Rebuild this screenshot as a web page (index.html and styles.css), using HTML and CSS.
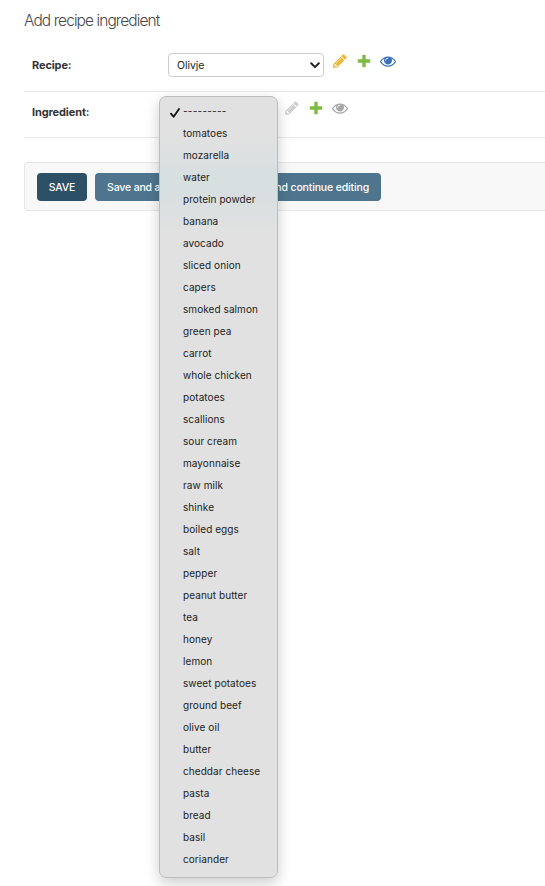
FILE: index.html
```html
<!DOCTYPE html>
<html lang="en">
<head>
<meta charset="utf-8">
<title>Add recipe ingredient</title>
<link rel="stylesheet" href="styles.css">
</head>
<body>
<svg class="defs" aria-hidden="true">
  <symbol id="pencil" viewBox="0 0 1792 1792"><path d="M491 1536l91-91-235-235-91 91v107h128v128h107zm523-928q0-22-22-22-10 0-17 7l-542 542q-7 7-7 17 0 22 22 22 10 0 17-7l542-542q7-7 7-17zm-54-192l416 416-832 832h-416v-416zm683 96q0 53-37 90l-166 166-416-416 166-165q36-38 90-38 53 0 91 38l235 234q37 39 37 91z"/></symbol>
  <symbol id="plus" viewBox="0 0 1792 1792"><path d="M1600 796v192q0 40-28 68t-68 28h-416v416q0 40-28 68t-68 28h-192q-40 0-68-28t-28-68v-416h-416q-40 0-68-28t-28-68v-192q0-40 28-68t68-28h416v-416q0-40 28-68t68-28h192q40 0 68 28t28 68v416h416q40 0 68 28t28 68z"/></symbol>
  <symbol id="eye" viewBox="0 0 1792 1792"><path d="M1664 960q-152-236-381-353 61 104 61 225 0 185-131.5 316.5t-316.5 131.5-316.5-131.5-131.5-316.5q0-121 61-225-229 117-381 353 133 205 333.5 326.5t434.5 121.5 434.5-121.5 333.5-326.5zm-720-384q0-20-14-34t-34-14q-125 0-214.5 89.5t-89.5 214.5q0 20 14 34t34 14 34-14 14-34q0-86 61-147t147-61q20 0 34-14t14-34zm848 384q0 34-20 69-140 230-376.5 368.5t-499.5 138.5-499.5-139-376.5-368q-20-35-20-69t20-69q140-229 376.5-368t499.5-139 499.5 139 376.5 368q20 35 20 69z"/></symbol>
</svg>
<main class="content">
  <h1 class="title">Add recipe ingredient</h1>
  <div class="row row-recipe">
    <span class="label">Recipe:</span>
    <div class="select">Olivje
      <svg class="chevron" viewBox="0 0 10 7"><path d="M1.2 1.3 5 5.1 8.8 1.3"/></svg>
    </div>
    <div class="links">
      <svg class="icon change"><use href="#pencil"/></svg>
      <svg class="icon add"><use href="#plus"/></svg>
      <svg class="icon view"><use href="#eye"/></svg>
    </div>
  </div>
  <div class="row row-ingredient">
    <span class="label">Ingredient:</span>
    <div class="closed-select">
      <ul class="menu">
        <li class="selected"><svg class="check" viewBox="0 0 10 10"><path d="M1 5.6 3.6 8.8 9 1"/></svg>---------</li>
        <li>tomatoes</li><li>mozarella</li><li>water</li><li>protein powder</li><li>banana</li><li>avocado</li>
        <li>sliced onion</li><li>capers</li><li>smoked salmon</li><li>green pea</li><li>carrot</li><li>whole chicken</li>
        <li>potatoes</li><li>scallions</li><li>sour cream</li><li>mayonnaise</li><li>raw milk</li><li>shinke</li>
        <li>boiled eggs</li><li>salt</li><li>pepper</li><li>peanut butter</li><li>tea</li><li>honey</li><li>lemon</li>
        <li>sweet potatoes</li><li>ground beef</li><li>olive oil</li><li>butter</li><li>cheddar cheese</li><li>pasta</li>
        <li>bread</li><li>basil</li><li>coriander</li>
      </ul>
    </div>
    <div class="links">
      <svg class="icon change disabled"><use href="#pencil"/></svg>
      <svg class="icon add"><use href="#plus"/></svg>
      <svg class="icon view-disabled"><use href="#eye"/></svg>
    </div>
  </div>
  <div class="submit-row">
    <span class="button primary">SAVE</span>
    <span class="button another">Save and a</span>
    <span class="button continue">nd continue editing</span>
  </div>
</main>
</body>
</html>
```
FILE: styles.css
```css
* { box-sizing: border-box; }
body {
  margin: 0;
  height: 886px;
  overflow: hidden;
  background: #fff;
  color: #333;
  font: 11px/16px Inter, "Liberation Sans", sans-serif;
}
.defs { position: absolute; width: 0; height: 0; }
.content { padding: 11px 0 0 24px; }
.title {
  margin: 0;
  height: 34px;
  font-size: 15.5px;
  line-height: 20px;
  font-weight: 300;
  letter-spacing: -0.92px;
  color: #484848;
}
.row { display: flex; align-items: flex-start; padding-left: 8px; border-bottom: 1px solid #e6e6e6; }
.row-recipe { height: 47px; padding-top: 8px; }
.row-ingredient { height: 46px; padding-top: 8px; }
.label { width: 136px; padding-top: 4px; font-weight: 700; letter-spacing: -0.12px; }
.select {
  display: flex;
  align-items: center;
  justify-content: space-between;
  width: 156px;
  height: 24px;
  padding: 1px 3px 0 8px;
  border: 1px solid #ccc;
  border-radius: 4px;
  color: #222;
  font-size: 10.5px;
  line-height: 17px;
  letter-spacing: -0.05px;
}
.chevron { width: 10px; height: 7px; fill: none; stroke: #222; stroke-width: 2; stroke-linecap: round; stroke-linejoin: round; }
.closed-select { position: relative; width: 108px; height: 24px; }
.links { display: flex; gap: 8px; margin-left: 8px; }
.icon { width: 16px; height: 16px; }
.change { fill: #ecb93e; }
.add { fill: #7fbb42; }
.view { fill: #3b6fbd; }
.change.disabled { fill: #cfcfcf; }
.view-disabled { fill: #a6a6a6; }
.menu {
  position: absolute;
  left: -9px;
  top: -4px;
  width: 119px;
  height: 782px;
  margin: 0;
  padding: 3px 0 0 23px;
  list-style: none;
  border: 1px solid #bdbdbd;
  border-radius: 7px;
  background: linear-gradient(#e1e1e1 0, #e1e1e1 40px, #d7dfe0 82px, #d9dfe0 102px, #e1e1e1 136px);
  box-shadow: 0 5px 14px rgba(0, 0, 0, .2);
  color: #1c1c1c;
  font-size: 10px;
  line-height: 22px;
  letter-spacing: 0.07px;
  white-space: nowrap;
}
.selected { position: relative; letter-spacing: 0.25px; }
.check { position: absolute; left: -13px; top: 8px; width: 10px; height: 10px; fill: none; stroke: #111; stroke-width: 1.8; stroke-linecap: round; stroke-linejoin: round; }
.submit-row {
  display: flex;
  gap: 8px;
  height: 49px;
  margin-top: 24px;
  padding: 10px 12px;
  border: 1px solid #e6e6e6;
  border-right: 0;
  border-radius: 4px 0 0 4px;
  background: #f8f8f8;
}
.button {
  height: 28px;
  padding-top: 1px;
  line-height: 28px;
  border-radius: 4px;
  background: #4f758e;
  color: #fff;
  font-size: 10.5px;
  font-weight: 500;
  letter-spacing: -0.15px;
  white-space: nowrap;
}
.primary { width: 50px; text-align: center; background: #2c5066; }
.another { width: 101px; padding-left: 12px; }
.continue { width: 177px; padding-right: 12px; text-align: right; }
```
